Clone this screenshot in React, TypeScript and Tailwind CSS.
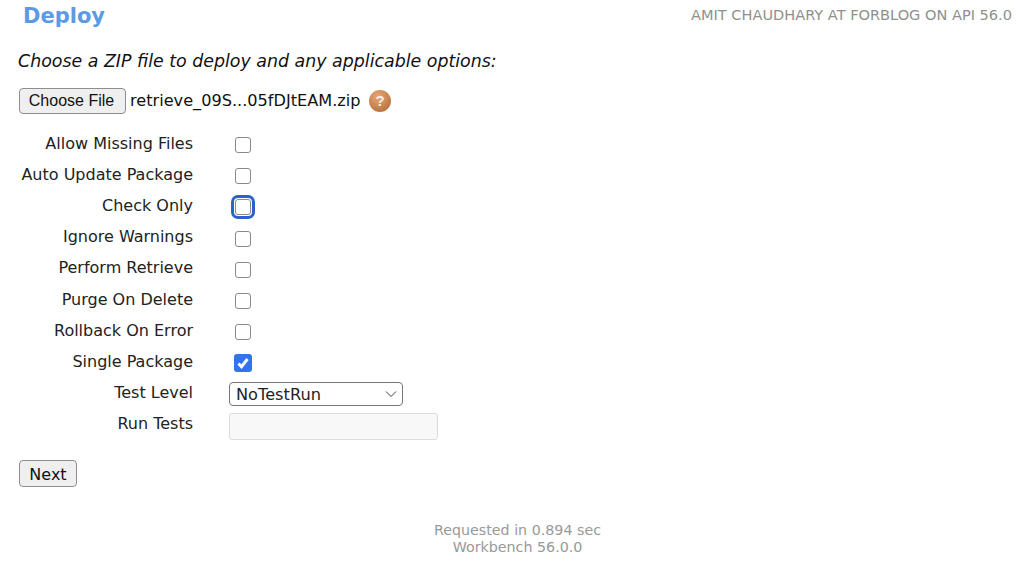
const options = [
  { label: "Allow Missing Files" },
  { label: "Auto Update Package" },
  { label: "Check Only", focused: true },
  { label: "Ignore Warnings" },
  { label: "Perform Retrieve" },
  { label: "Purge On Delete" },
  { label: "Rollback On Error" },
  { label: "Single Package", checked: true },
];

function Checkbox({ checked, focused }: { checked?: boolean; focused?: boolean }) {
  if (checked) {
    return (
      <span className="-ml-[1px] flex h-[18px] w-[18px] items-center justify-center rounded-[3px] bg-[#2f75ef]">
        <svg viewBox="0 0 16 16" className="h-[16px] w-[16px]" fill="none" stroke="white" strokeWidth={3}>
          <path d="M3.5 8.5l3 3.2 6-7.7" />
        </svg>
      </span>
    );
  }
  return (
    <span
      className={`block h-[16px] w-[16px] rounded-[3px] border border-[#8a8a8a] bg-white ${
        focused ? "outline-[3px] outline-offset-[1px] outline-[#2a62c8]" : ""
      }`}
    />
  );
}

function HelpIcon() {
  return (
    <svg viewBox="0 0 22 22" className="ml-2 h-[22px] w-[22px]">
      <defs>
        <radialGradient id="help" cx="40%" cy="30%" r="75%">
          <stop offset="0%" stopColor="#e8a777" />
          <stop offset="100%" stopColor="#b8713c" />
        </radialGradient>
      </defs>
      <circle cx="11" cy="11" r="11" fill="url(#help)" />
      <text x="11" y="16" textAnchor="middle" fontSize="15" fontWeight="700" fill="#fbeee2" fontFamily="Liberation Sans, sans-serif">
        ?
      </text>
    </svg>
  );
}

export default function App() {
  return (
    <div className="h-[569px] w-[1024px] overflow-hidden bg-white font-['DejaVu_Sans',sans-serif] text-[16px] text-[#222]">
      <header className="flex items-start justify-between pl-[23px] pr-[12px] pt-[3px]">
        <h1 className="text-[21px] leading-[26px] font-bold text-[#5b9be6]">Deploy</h1>
        <p className="pt-[2px] text-[14.55px] leading-[20px] text-[#8f8f8f]">AMIT CHAUDHARY AT FORBLOG ON API 56.0</p>
      </header>

      <main className="pl-[18px] pt-[20px]">
        <p className="text-[17.4px] leading-[24px] italic text-[#111]">Choose a ZIP file to deploy and any applicable options:</p>

        <div className="mt-[15px] flex items-center">
          <button className="ml-[1px] h-[26px] w-[107px] rounded-[4px] border border-[#8e8e8e] bg-[#efefef] pr-[2px] font-['Liberation_Sans',sans-serif] text-[16px] text-[#111]">
            Choose File
          </button>
          <span className="ml-[4px] pt-[1px] text-[16.15px] text-[#111]">retrieve_09S...05fDJtEAM.zip</span>
          <HelpIcon />
        </div>

        <div className="mt-[14px] grid grid-cols-[175px_1fr] auto-rows-[31.2px] items-center">
          {options.map((option) => (
            <div key={option.label} className="contents">
              <span className="text-right text-[16px] leading-[20px]">{option.label}</span>
              <span className="ml-[42px] pt-[3px]">
                <Checkbox checked={option.checked} focused={option.focused} />
              </span>
            </div>
          ))}
          <span className="text-right text-[16px] leading-[20px]">Test Level</span>
          <div className="ml-[36px] pt-[1px]">
            <div className="flex h-[24px] w-[174px] items-center justify-between rounded-[4px] border border-[#767676] bg-white pl-[6px] pr-[4px] pt-[4px] text-[16.2px]">
              NoTestRun
              <svg viewBox="0 0 14 8" className="-mt-[3px] h-[8px] w-[14px]" fill="none" stroke="#444" strokeWidth={1}>
                <path d="M2 1.5l5 5 5-5" />
              </svg>
            </div>
          </div>
          <span className="text-right text-[16px] leading-[20px]">Run Tests</span>
          <div className="ml-[36px] pt-[5px]">
            <div className="h-[27px] w-[209px] rounded-[3px] border border-[#dcdcdc] bg-[#f8f8f8]" />
          </div>
        </div>

        <button className="ml-[1px] mt-[20px] h-[27px] w-[58px] rounded-[4px] border border-[#8e8e8e] bg-[#efefef] pt-[2px] text-[16px] text-[#111]">
          Next
        </button>
      </main>

      <footer className="mt-[35px] pl-[11px] text-center text-[14.25px] leading-[17px] text-[#999]">
        <p>Requested in 0.894 sec</p>
        <p>Workbench 56.0.0</p>
      </footer>
    </div>
  );
}
